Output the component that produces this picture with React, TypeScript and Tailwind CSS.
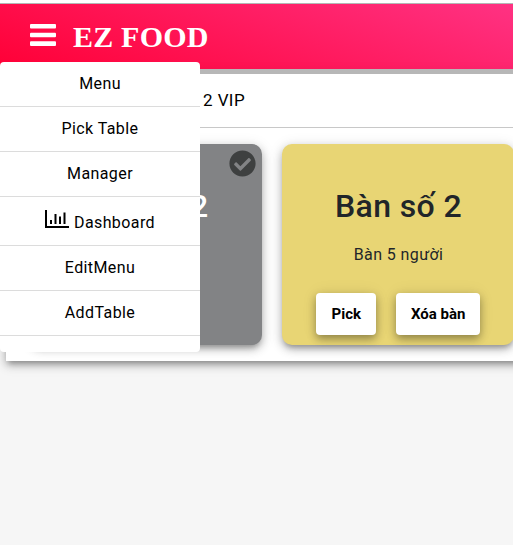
import React from "react";
import { FaCheckCircle } from "react-icons/fa";

const elevated =
  "shadow-[0_5px_5px_-3px_rgba(0,0,0,0.2),0_4px_8px_0_rgba(0,0,0,0.26),0_2px_14px_1px_rgba(0,0,0,0.1)]";
const raised = "shadow-[0_4px_8px_0_rgba(0,0,0,0.35),0_0_16px_0_rgba(0,0,0,0.08)]";

function BarsIcon() {
  return (
    <svg
      width="26"
      height="22"
      viewBox="0 0 26 22"
      fill="currentColor"
      className="mb-[3px]"
      aria-hidden="true"
    >
      <rect y="0" width="26" height="4.600" rx="1" />
      <rect y="8.700" width="26" height="4.600" rx="1" />
      <rect y="17.300" width="26" height="4.600" rx="1" />
    </svg>
  );
}

function ChartIcon() {
  return (
    <svg
      width="24"
      height="18"
      viewBox="0 0 24 18"
      fill="none"
      stroke="currentColor"
      strokeWidth="2"
      className="mb-1 mr-[5px] shrink-0"
      aria-hidden="true"
    >
      <path d="M1 0v17h23M6 10v4M10.500 4v10M15 6.500v7.500M19.500 2.500v11.500" />
    </svg>
  );
}

function MenuItem({ children }: { children: React.ReactNode }) {
  return (
    <li className="flex h-[45px] items-center justify-center border-b border-[#dcdcdc] pb-px">
      {children}
    </li>
  );
}

function CardButton({ children }: { children: React.ReactNode }) {
  return (
    <button
      className={`h-[42px] rounded-[4px] bg-white pl-[15.5px] pr-[14.5px] text-[15px] font-bold tracking-normal text-black ${raised}`}
    >
      {children}
    </button>
  );
}

export default function App() {
  return (
    <div className="relative h-[545px] w-[513px] overflow-hidden bg-[#f6f6f6] font-[Roboto,sans-serif] text-base tracking-[0.4px] text-black">
      <div className="h-[4px] border-b border-[#b5b5b5] bg-white" />
      <header className="flex h-[65px] items-center gap-[17px] bg-[linear-gradient(20deg,#ff0036,#ff3283)] pl-[30px] text-white">
        <BarsIcon />
        <span className="font-['Liberation_Serif',serif] text-[30px] font-bold leading-none tracking-[0.2px]">
          EZ FOOD
        </span>
      </header>
      <div className="relative z-10 h-[5px] bg-[#b7b7b7]" />

      <main className={`ml-[6px] h-[287px] w-[620px] bg-white ${elevated}`}>
        <div className="flex h-[54px] items-center justify-end border-b border-[#c8c8c8] pr-[381px] text-[17px]">
          <span className="whitespace-nowrap">Tầng 2 VIP</span>
        </div>
        <div className="flex gap-5 pl-6 pt-4">
          <section
            className={`relative h-[201px] w-[232px] shrink-0 rounded-[10px] bg-[#828385] text-center text-white ${elevated}`}
          >
            <h2 className="pr-[2px] pt-[42px] text-[32px] font-medium leading-10">Bàn số 2</h2>
            <FaCheckCircle className="absolute right-[6px] top-[6px] size-[27px] text-[#3e4040]" />
          </section>
          <section
            className={`h-[201px] w-[232px] shrink-0 rounded-[10px] bg-[#e8d574] text-center text-[#212529] ${elevated}`}
          >
            <h2 className="pl-px pt-[42px] text-[32px] font-medium leading-10">Bàn số 2</h2>
            <p className="mt-[17px] pl-px leading-6">Bàn 5 người</p>
            <div className="mt-[26px] flex justify-center gap-5">
              <CardButton>Pick</CardButton>
              <CardButton>Xóa bàn</CardButton>
            </div>
          </section>
        </div>
      </main>

      <ul className="absolute left-0 top-[62px] z-20 h-[290px] w-[200px] rounded-[4px] bg-white">
        <MenuItem>Menu</MenuItem>
        <MenuItem>Pick Table</MenuItem>
        <MenuItem>Manager</MenuItem>
        <li className="flex h-[49px] items-center justify-center border-b border-[#dcdcdc]">
          <ChartIcon />
          <span className="pt-[3px]">Dashboard</span>
        </li>
        <MenuItem>EditMenu</MenuItem>
        <MenuItem>AddTable</MenuItem>
      </ul>
    </div>
  );
}
